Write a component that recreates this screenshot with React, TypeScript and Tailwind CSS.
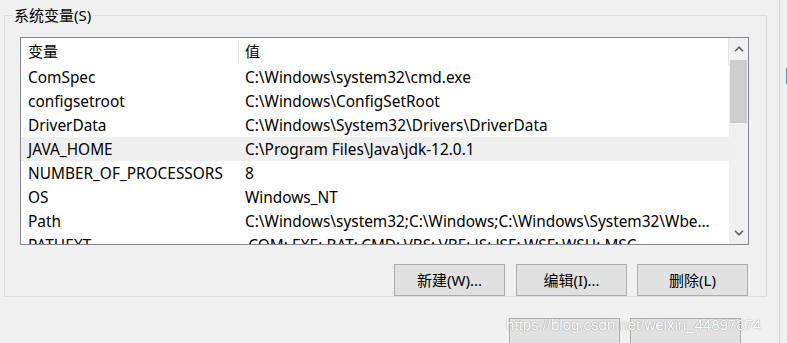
import React from 'react';

const rows = [
  { name: 'ComSpec', value: 'C:\\Windows\\system32\\cmd.exe' },
  { name: 'configsetroot', value: 'C:\\Windows\\ConfigSetRoot' },
  { name: 'DriverData', value: 'C:\\Windows\\System32\\Drivers\\DriverData' },
  { name: 'JAVA_HOME', value: 'C:\\Program Files\\Java\\jdk-12.0.1', selected: true },
  { name: 'NUMBER_OF_PROCESSORS', value: '8' },
  { name: 'OS', value: 'Windows_NT' },
  { name: 'Path', value: 'C:\\Windows\\system32;C:\\Windows;C:\\Windows\\System32\\Wbem;C:\\Windows\\System32\\WindowsPowerShell\\v1.0\\' },
  { name: 'PATHEXT', value: '.COM;.EXE;.BAT;.CMD;.VBS;.VBE;.JS;.JSE;.WSF;.WSH;.MSC' },
];

function Chevron({ down }: { down?: boolean }) {
  return (
    <svg width="10" height="6" viewBox="0 0 10 6" className={down ? 'rotate-180' : ''}>
      <path d="M1 5.2 L5 1.2 L9 5.2" fill="none" stroke="#606060" strokeWidth="1.6" />
    </svg>
  );
}

function WinButton({ label, className = '' }: { label?: string; className?: string }) {
  return (
    <div
      className={`w-[111px] h-[32px] border border-[#adadad] bg-[#e1e1e1] flex items-center justify-center text-[15px] text-black ${className}`}
    >
      {label}
    </div>
  );
}

export default function App() {
  return (
    <div
      className="w-[787px] h-[343px] bg-[#f0f0f0] overflow-hidden relative flex"
      style={{ fontFamily: '"Noto Sans", "Noto Sans CJK SC", sans-serif' }}
    >
      <div className="w-[779px] shrink-0 flex flex-col">
        {/* 系统变量 group box */}
        <div className="ml-[4px] mt-[15px] w-[763px] h-[302px] border border-[#dcdcdc] flex flex-col">
          <div className="-mt-[11px] ml-[7px] px-[2px] w-fit bg-[#f0f0f0] text-[15px] leading-[20px] text-black">
            系统变量(S)
          </div>

          {/* list view */}
          <div className="ml-[15px] mt-[12px] w-[729px] h-[208px] border border-[#828790] bg-white flex overflow-hidden">
            <div className="flex-1 flex flex-col overflow-hidden">
              <div className="h-[27px] shrink-0 flex items-center text-[15px] text-black">
                <div className="w-[217px] pl-[7px]">变量</div>
                <div className="h-[24px] w-px bg-[#e5e5e5]" />
                <div className="flex-1 pl-[6px] h-full flex items-center border-r border-[#e5e5e5]">值</div>
              </div>
              {rows.map((r) => (
                <div
                  key={r.name}
                  className={`h-[24px] shrink-0 pt-[2px] flex items-center text-[15.4px] text-black ${r.selected ? 'bg-[#efefef]' : ''}`}
                >
                  <div className="w-[218px] pl-[7px] whitespace-nowrap">{r.name}</div>
                  <div className="flex-1 pl-[6px] pr-[8px] whitespace-nowrap overflow-hidden text-ellipsis">{r.value}</div>
                </div>
              ))}
            </div>

            {/* scrollbar */}
            <div className="w-[19px] shrink-0 bg-[#f0f0f0] flex flex-col">
              <div className="h-[22px] flex items-center justify-center">
                <Chevron />
              </div>
              <div className="mx-[1px] h-[63px] bg-[#cdcdcd]" />
              <div className="flex-1" />
              <div className="h-[22px] flex items-center justify-center">
                <Chevron down />
              </div>
            </div>
          </div>

          {/* buttons */}
          <div className="mt-[19px] ml-[389px] flex gap-[11px]">
            <WinButton label="新建(W)..." />
            <WinButton label="编辑(I)..." />
            <WinButton label="删除(L)" className="-ml-[1px]" />
          </div>
        </div>

        {/* dialog buttons, cut off at the bottom */}
        <div className="mt-[21px] ml-[509px] flex gap-[10px]">
          <WinButton />
          <WinButton />
        </div>
      </div>

      {/* right edge */}
      <div className="flex-1 border-l border-[#d4d4d4] overflow-hidden">
        <div className="mt-[62px] ml-[2px] text-[17px] leading-[24px] text-[#1a8ad8] whitespace-nowrap">|i</div>
      </div>

      {/* watermark */}
      <div
        className="absolute left-[506px] top-[316px] text-[15px] leading-[18px] text-white whitespace-nowrap [text-shadow:0_0_1px_#9a9a9a,0_0_1px_#9a9a9a]"
        style={{ fontFamily: '"Liberation Sans", Arial, sans-serif' }}
      >
        https://blog.csdn.net/weixin_44897874
      </div>
    </div>
  );
}
